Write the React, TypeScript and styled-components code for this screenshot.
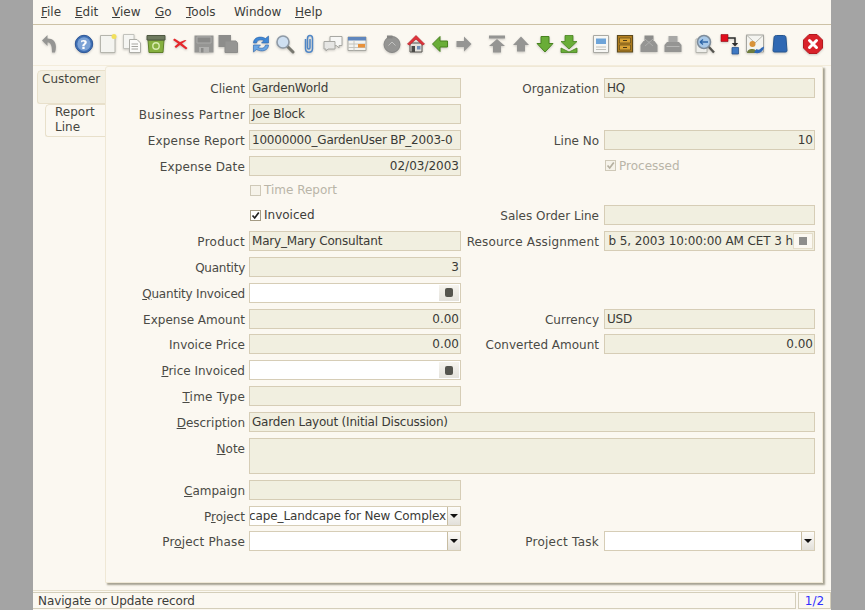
import React from "react";
import styled, { createGlobalStyle } from "styled-components";

const GlobalStyle = createGlobalStyle`
  html, body { margin: 0; padding: 0; height: 100%; background: #a4a4a4; overflow: hidden; }
  body { font-family: "DejaVu Sans", sans-serif; font-size: 12px; color: #3d3d3a; }
`;

const Page = styled.div`
  width: 798px;
  height: 610px;
  margin-left: 33px;
  background: #fbf8f1;
  display: flex;
  flex-direction: column;
`;

const MenuBar = styled.div`
  height: 24px;
  flex: none;
  display: flex;
  align-items: center;
  border-bottom: 1px solid #cdc2a6;
  padding-left: 8px;
  line-height: 24px;
`;

const MenuItem = styled.span<{ $w: number }>`
  width: ${(p) => p.$w}px;
  color: #3d3d3a;
`;

const ToolBar = styled.div`
  box-sizing: border-box;
  height: 41px;
  flex: none;
  display: flex;
  align-items: center;
  padding: 0 0 3px 5px;
  border-bottom: 1px solid #f3ecdb;
`;

const ToolGroup = styled.div<{ $gap?: number; $inner?: number }>`
  display: flex;
  margin-left: ${(p) => p.$gap ?? 0}px;
  gap: ${(p) => p.$inner ?? 0}px;
`;

const ToolIcon = styled.svg`
  width: 24px;
  height: 24px;
  display: block;
  filter: drop-shadow(0 1px 1px rgba(0, 0, 0, 0.2));
`;

const Body = styled.div`
  box-sizing: border-box;
  flex: none;
  height: 525px;
  display: flex;
  padding: 0 8px 0 4px;
  border-bottom: 1px solid #e6dfcc;
`;

const TabColumn = styled.div`
  width: 68px;
  flex: none;
  padding-top: 4px;
  display: flex;
  flex-direction: column;
  align-items: flex-end;
`;

const Tab = styled.div<{ $active?: boolean }>`
  box-sizing: border-box;
  width: ${(p) => (p.$active ? 60 : 68)}px;
  height: ${(p) => (p.$active ? 33 : 34)}px;
  padding: ${(p) => (p.$active ? "0 0 0 9px" : "1px 0 0 4px")};
  line-height: 15px;
  background: ${(p) => (p.$active ? "#fbf8f1" : "#f3efe1")};
  border: 1px solid #e8e0cb;
  border-right: none;
  border-radius: 5px 0 0 3px;
  color: #46463f;
`;

const Panel = styled.div`
  box-sizing: border-box;
  width: 718px;
  height: 517px;
  padding: 11px 8px 0 11px;
  border: 1px solid #efe8d6;
  border-radius: 3px 0 0 0;
  box-shadow: 2px 2px 2px #a5a190;
`;

const FormGrid = styled.div`
  display: grid;
  grid-template-columns: 128px 212px 135px 211px;
  grid-template-rows: repeat(4, 20px) 18px repeat(9, 20px) 36px repeat(3, 20px);
  column-gap: 4px;
  row-gap: 5.85px;
`;

const Label = styled.label<{ $col?: number; $off?: boolean; $track?: number }>`
  grid-column: ${(p) => p.$col ?? 1};
  text-align: right;
  line-height: 23px;
  padding-right: ${(p) => (p.$col === 3 ? 1 : 0)}px;
  letter-spacing: ${(p) => p.$track ?? 0}px;
  white-space: nowrap;
  color: ${(p) => (p.$off ? "#b9b5a8" : "#4a4a45")};
`;

const Field = styled.div<{ $col?: number; $span?: number; $edit?: boolean; $right?: boolean; $reserve?: number }>`
  grid-column: ${(p) => p.$col ?? 2} / span ${(p) => p.$span ?? 1};
  box-sizing: border-box;
  border: 1px solid #d6cdb6;
  background: ${(p) => (p.$edit ? "#ffffff" : "#f1efe0")};
  display: flex;
  justify-content: ${(p) => (p.$right ? "flex-end" : "flex-start")};
  padding: 0 ${(p) => p.$reserve ?? 1}px 0 2px;
  line-height: 18px;
  letter-spacing: ${(p) => (p.$right ? 0 : -0.2)}px;
  color: #3a3a36;
  white-space: nowrap;
  overflow: hidden;
  position: relative;
`;

const ClipText = styled.span`
  flex: none;
  letter-spacing: -0.1px;
`;

const FieldButton = styled.span<{ $flat?: boolean }>`
  position: absolute;
  right: 1px;
  top: 1px;
  width: 20px;
  height: 16px;
  display: flex;
  align-items: center;
  justify-content: center;
  background: ${(p) => (p.$flat ? "#fbf8f1" : "linear-gradient(#f6f4ee, #e4e2dc)")};
  border: ${(p) => (p.$flat ? "1px solid #e4ddca" : "none")};
  box-sizing: border-box;
`;

const ComboButton = styled.span`
  position: absolute;
  right: 0;
  top: 0;
  bottom: 0;
  width: 12px;
  display: flex;
  align-items: center;
  justify-content: center;
  border-left: 1px solid #c8bda2;
  background: linear-gradient(#fdfcf9, #e2e0da);
`;

const ComboArrow = styled.i`
  width: 0;
  height: 0;
  border-left: 4px solid transparent;
  border-right: 4px solid transparent;
  border-top: 4px solid #111;
`;

const Can = styled.i`
  width: 8px;
  height: 9px;
  border-radius: 2px;
  background: #55554f;
`;

const Square = styled.i`
  width: 8px;
  height: 8px;
  background: #8d8d8b;
`;

const CheckRow = styled.div<{ $col?: number; $off?: boolean }>`
  grid-column: ${(p) => p.$col ?? 2};
  display: flex;
  align-items: center;
  gap: 3px;
  padding-left: 1px;
  color: ${(p) => (p.$off ? "#b9b5a8" : "#3d3d3a")};
`;

const CheckBox = styled.span<{ $off?: boolean }>`
  width: 9px;
  height: 9px;
  flex: none;
  border: 1px solid ${(p) => (p.$off ? "#cfc9b8" : "#a49b84")};
  background: ${(p) => (p.$off ? "#f6f3ea" : "#fff")};
  display: flex;
`;

const StatusBar = styled.div`
  flex: none;
  height: 17px;
  margin-top: 1px;
  display: flex;
  gap: 2px;
`;

const StatusText = styled.div`
  flex: 1;
  border: 1px solid #d4ceba;
  border-left: none;
  padding-left: 5px;
  line-height: 16px;
  letter-spacing: -0.1px;
  color: #3d3d3a;
`;

const StatusPage = styled.div`
  width: 31px;
  flex: none;
  text-align: center;
  border: 1px solid #d4ceba;
  line-height: 16px;
  color: #3030ff;
`;

const Tick = ({ off }: { off?: boolean }) => (
  <svg width="9" height="9" viewBox="0 0 9 9">
    <path d="M1.5 4.5 L3.7 7 L7.8 1.5" fill="none" stroke={off ? "#b5b0a0" : "#222"} strokeWidth="1.7" />
  </svg>
);

const G = "#959593";
const Green = "#69ad38";
const GreenDark = "#48821f";

const icons: Record<string, React.ReactNode> = {
  undo: <path d="M9.5 3 L4 8.5 L9.5 14 V10.5 C12.5 10.5 14 13 14 20.5 H17 C19.5 12.5 17 6.5 9.5 6.5 Z" fill={G} />,
  help: (
    <>
      <circle cx="12" cy="12" r="8.7" fill="#3f6fb4" stroke="#2c5596" />
      <circle cx="12" cy="12" r="6.7" fill="#7ba2d6" />
      <text x="12" y="16.5" textAnchor="middle" fontSize="12.5" fontWeight="bold" fill="#fff" fontFamily="DejaVu Sans">?</text>
    </>
  ),
  add: (
    <>
      <path d="M4.5 3.5 H19 V20.5 H4.5 Z" fill="#f4f4f0" stroke="#b5b5ad" />
      <circle cx="18" cy="4.5" r="2.5" fill="#f2e05c" />
    </>
  ),
  copy: (
    <>
      <path d="M3.5 2.5 H14 V16.5 H3.5 Z" fill="#f5f5f2" stroke="#c2c2bc" />
      <path d="M9.5 7.5 H17 L20.5 11 V20.5 H9.5 Z" fill="#fbfbf9" stroke="#adada7" />
      <path d="M11.5 12 H18 M11.5 14.5 H18 M11.5 17 H18" stroke="#a5a5a0" />
    </>
  ),
  trash: (
    <>
      <path d="M4 8 H20 L19 20.5 H5 Z" fill="#86b03f" stroke="#5f7f29" />
      <path d="M3 3.5 H21 V8 H3 Z" fill="#6e7a5e" stroke="#4f5842" />
      <circle cx="12" cy="14" r="3.2" fill="none" stroke="#d8ebb0" strokeWidth="1.4" />
    </>
  ),
  del: <path d="M5 8 L10 11.5 L6.5 14.5 L8 16 L12 13 L18 17.5 L19.5 16 L14 11.5 L18.5 8.5 L17 8 L12 10 L6.5 6.5 Z" fill="#e5282c" />,
  save: (
    <>
      <path d="M2.5 3.5 H21.5 V20.5 H2.5 Z" fill={G} />
      <path d="M5 5 H19 V11 H5 Z" fill="#8a8a88" stroke="#acacaa" />
      <path d="M7 15 H17 V20.5 H7 Z" fill="#b0b0ae" />
      <path d="M9 16 H11.5 V20.5 H9 Z" fill="#8a8a88" />
    </>
  ),
  saveNew: (
    <>
      <path d="M2.5 3 H15 V15 H2.5 Z" fill="#8d8d8b" />
      <path d="M9 9 H20 L21.5 11 V20.5 H9 Z" fill={G} stroke="#8d8d8b" />
    </>
  ),
  refresh: (
    <>
      <path d="M4.5 11 C4.5 5.5 11 3.5 16.5 6.5 L19.5 4 V11 H12.5 L15 8.5 C11 7 8 8 7.5 11 Z" fill="#3f88d6" stroke="#2a62a8" strokeWidth="0.6" />
      <path d="M19.5 13 C19.5 18.5 13 20.5 7.5 17.5 L4.5 20 V13 H11.5 L9 15.5 C13 17 16 16 16.5 13 Z" fill="#6aa6e4" stroke="#2a62a8" strokeWidth="0.6" />
    </>
  ),
  find: (
    <>
      <path d="M14 14 L20 20" stroke="#77776f" strokeWidth="3" strokeLinecap="round" />
      <circle cx="10" cy="10" r="6" fill="#cfe0f2" stroke="#8f9aa6" strokeWidth="1.6" />
    </>
  ),
  attach: (
    <path d="M8.5 7 V16.5 C8.5 21.5 15.5 21.5 15.5 16.5 V6.5 C15.5 2.5 10.5 2.5 10.5 6.5 V15.5 C10.5 17.5 13 17.5 13 15.5 V7" fill="none" stroke="#4f86c6" strokeWidth="1.5" />
  ),
  chat: (
    <>
      <path d="M9 4.5 H21 V13.5 H18 V16 L15.5 13.5 H9 Z" fill="#f7f7f5" stroke="#a8a8a3" />
      <path d="M3 9.5 H14 V17 H7 L5 19 V17 H3 Z" fill="#e6e6e4" stroke="#a8a8a3" />
    </>
  ),
  grid: (
    <>
      <path d="M3 5 H21 V18.5 H3 Z" fill="#f3f3ef" stroke="#a9a9a3" />
      <path d="M3 5 H21 V8.5 H3 Z" fill="#5f86bd" />
      <path d="M3 12 H21 M3 15.5 H21 M9 8.5 V18.5" stroke="#c4c4be" />
      <path d="M13 12 H20 V15.5 H13 Z" fill="#e8913a" />
    </>
  ),
  history: (
    <>
      <circle cx="12" cy="12.5" r="8" fill={G} stroke="#858583" />
      <path d="M8.5 13.5 L12 10 L15.5 13.5" fill="none" stroke="#c2c2c0" />
      <path d="M7 3.5 H12.5 V6.5 H7 Z" fill="#858583" />
    </>
  ),
  home: (
    <>
      <path d="M6 11 H18 V20 H6 Z" fill="#e5e3dd" stroke="#55534f" />
      <path d="M3.5 12 L12 3.5 L20.5 12 L18.5 13 L12 7 L5.5 13 Z" fill="#e2323a" stroke="#b31e25" strokeWidth="0.7" />
      <path d="M7.5 14 H11 V20 H7.5 Z" fill="#4a4a47" />
      <path d="M13 14 H16.5 V17.5 H13 Z" fill="#6e8fb8" />
    </>
  ),
  left: <path d="M4.5 12 L12 4.5 V9 H19.5 V15 H12 V19.5 Z" fill={Green} stroke={GreenDark} />,
  right: <path d="M19.5 12 L12 4.5 V9 H4.5 V15 H12 V19.5 Z" fill={G} />,
  first: <path d="M4 3.5 H20 V6.5 H4 Z M12 7 L20 14 H16 V20.5 H8 V14 H4 Z" fill={G} />,
  up: <path d="M12 4.5 L20 13 H16 V19.5 H8 V13 H4 Z" fill={G} />,
  down: <path d="M12 20 L20 11.5 H16 V4.5 H8 V11.5 H4 Z" fill={Green} stroke={GreenDark} />,
  last: <path d="M8 3.5 H16 V9.5 H20 L12 17 L4 9.5 H8 Z M4 16 L12 20 L20 16 V20.5 H4 Z" fill={Green} stroke={GreenDark} strokeWidth="0.8" />,
  report: (
    <>
      <path d="M4.5 3.5 H19.5 V20.5 H4.5 Z" fill="#f7f7f4" stroke="#a9a9a3" />
      <path d="M7 6.5 H17 V12 H7 Z" fill="#6ea4d8" />
      <path d="M7 15 H17 M7 17.5 H17" stroke="#c0c0ba" />
    </>
  ),
  archive: (
    <>
      <path d="M4.5 3.5 H19.5 V20 H4.5 Z" fill="#b5801f" stroke="#5d4a1d" strokeWidth="1.2" />
      <path d="M6.5 6 H17.5 V11 H6.5 Z M6.5 13 H17.5 V18 H6.5 Z" fill="#d9a234" stroke="#5d4a1d" strokeWidth="0.7" />
      <path d="M10 8.5 H14 M10 15.5 H14" stroke="#4a3a14" strokeWidth="1.2" />
    </>
  ),
  preview: (
    <>
      <path d="M7.5 3.5 H16.5 V11 H7.5 Z" fill="#8d8d8b" />
      <path d="M3.5 13 L6.5 9 H17.5 L20.5 13 V20 H3.5 Z" fill={G} />
      <path d="M8 7 L16 14 M16 7 L8 14" stroke="#adadab" />
    </>
  ),
  print: (
    <>
      <path d="M7.5 4 H16.5 V11 H7.5 Z" fill="#a8a8a6" />
      <path d="M3.5 13 L6 10 H18 L20.5 13 V20 H3.5 Z" fill={G} />
      <path d="M5.5 14.5 H18.5" stroke="#b6b6b4" />
    </>
  ),
  zoom: (
    <>
      <path d="M3 7 H14 V20.5 H3 Z" fill="#eeeeea" stroke="#b5b5ae" />
      <path d="M15 14 L21 20.5" stroke="#55554f" strokeWidth="2.4" />
      <circle cx="11" cy="10" r="6.5" fill="#a9c9e8" stroke="#7e8c9a" strokeWidth="1.5" />
      <path d="M7 10 H15 M7 10 L10 7.5 M7 10 L10 12.5" stroke="#2f67a8" strokeWidth="1.3" fill="none" />
    </>
  ),
  workflow: (
    <>
      <path d="M3 2.5 H10 V9.5 H3 Z" fill="#e00d1c" stroke="#8f0a14" strokeWidth="0.6" />
      <path d="M14 15.5 H20.5 V22 H14 Z" fill="#3e78c2" stroke="#28548e" strokeWidth="0.8" />
      <path d="M10 6 H17 V12" fill="none" stroke="#2c2c2c" strokeWidth="1.5" />
      <path d="M13.8 11 H20.2 L17 14.5 Z" fill="#2c2c2c" />
    </>
  ),
  request: (
    <>
      <path d="M3.5 3 H20.5 V20 H3.5 Z" fill="#f4f4f0" stroke="#a5a5a0" />
      <path d="M3.5 3 L12 11 L20.5 3" fill="none" stroke="#b5b5ae" />
      <circle cx="9.5" cy="12" r="3" fill="#d8933a" />
      <path d="M4 21 C4 15.5 14 15.5 14 21 Z" fill="#6f7d3d" />
      <path d="M11 20.5 C16 22.5 21 19.5 21 14.5 L18 16 C17 18 15 18 13.5 17 Z" fill="#2f69b8" />
    </>
  ),
  product: <path d="M6 6 C6 4 7 3.5 8.5 3.5 H15.5 C17 3.5 18 4 18 6 L19 18.5 C19 19.5 18.5 20 17.5 20 H6.5 C5.5 20 5 19.5 5 18.5 Z" fill="#2f68b3" stroke="#26568f" />,
  close: (
    <>
      <path d="M8 2.5 H16 L21.5 8 V16 L16 21.5 H8 L2.5 16 V8 Z" fill="#d9222a" stroke="#b31a20" />
      <path d="M8.5 8.5 L15.5 15.5 M15.5 8.5 L8.5 15.5" stroke="#fff" strokeWidth="3" strokeLinecap="round" />
    </>
  ),
};

const toolGroups: { gap: number; inner?: number; names: string[] }[] = [
  { gap: 0, names: ["undo"] },
  { gap: 10, names: ["help", "add", "copy", "trash", "del", "save", "saveNew"] },
  { gap: 9, names: ["refresh", "find", "attach", "chat", "grid"] },
  { gap: 11, names: ["history", "home", "left", "right"] },
  { gap: 9, names: ["first", "up", "down", "last"] },
  { gap: 8, names: ["report", "archive", "preview", "print"] },
  { gap: 8, inner: 1, names: ["zoom", "workflow", "request", "product"] },
  { gap: 9, names: ["close"] },
];

const menus: [React.ReactNode, number][] = [
  [<><u>F</u>ile</>, 34],
  [<><u>E</u>dit</>, 37],
  [<><u>V</u>iew</>, 43],
  [<><u>G</u>o</>, 31],
  [<><u>T</u>ools</>, 48],
  ["Window", 61],
  [<><u>H</u>elp</>, 40],
];

export default function App() {
  return (
    <>
      <GlobalStyle />
      <Page>
        <MenuBar>
          {menus.map(([t, w], i) => (
            <MenuItem key={i} $w={w}>{t}</MenuItem>
          ))}
        </MenuBar>
        <ToolBar>
          {toolGroups.map((g, i) => (
            <ToolGroup key={i} $gap={g.gap} $inner={g.inner}>
              {g.names.map((n) => (
                <ToolIcon key={n} viewBox="0 0 24 24">{icons[n]}</ToolIcon>
              ))}
            </ToolGroup>
          ))}
        </ToolBar>
        <Body>
          <TabColumn>
            <Tab>Customer</Tab>
            <Tab $active>Report<br />Line</Tab>
          </TabColumn>
          <Panel>
            <FormGrid>
              <Label>Client</Label>
              <Field>GardenWorld</Field>
              <Label $col={3}>Organization</Label>
              <Field $col={4}>HQ</Field>

              <Label $track={0.37}>Business Partner</Label>
              <Field>Joe Block</Field>

              <Label $track={0.2}>Expense Report</Label>
              <Field>10000000_GardenUser BP_2003-0</Field>
              <Label $col={3}>Line No</Label>
              <Field $col={4} $right>10</Field>

              <Label $track={0.15}>Expense Date</Label>
              <Field $right>02/03/2003</Field>
              <CheckRow $col={4} $off><CheckBox $off><Tick off /></CheckBox>Processed</CheckRow>

              <CheckRow $off><CheckBox $off />Time Report</CheckRow>

              <CheckRow><CheckBox><Tick /></CheckBox>Invoiced</CheckRow>
              <Label $col={3}>Sales Order Line</Label>
              <Field $col={4} />

              <Label $track={0.3}>Product</Label>
              <Field>Mary_Mary Consultant</Field>
              <Label $col={3} $track={0.15}>Resource Assignment</Label>
              <Field $col={4} $right $reserve={21}>
                <ClipText>b 5, 2003 10:00:00 AM CET 3 h</ClipText>
                <FieldButton $flat><Square /></FieldButton>
              </Field>

              <Label $track={-0.25}>Quantity</Label>
              <Field $right>3</Field>

              <Label $track={-0.2}><u>Q</u>uantity Invoiced</Label>
              <Field $edit><FieldButton><Can /></FieldButton></Field>

              <Label>Expense Amount</Label>
              <Field $right>0.00</Field>
              <Label $col={3}>Currency</Label>
              <Field $col={4}>USD</Field>

              <Label>Invoice Price</Label>
              <Field $right>0.00</Field>
              <Label $col={3}>Converted Amount</Label>
              <Field $col={4} $right>0.00</Field>

              <Label><u>P</u>rice Invoiced</Label>
              <Field $edit><FieldButton><Can /></FieldButton></Field>

              <Label $track={0.2}><u>T</u>ime Type</Label>
              <Field />

              <Label><u>D</u>escription</Label>
              <Field $span={3}>Garden Layout (Initial Discussion)</Field>

              <Label><u>N</u>ote</Label>
              <Field $span={3} />

              <Label><u>C</u>ampaign</Label>
              <Field />

              <Label>P<u>r</u>oject</Label>
              <Field $edit $right $reserve={14}>
                <ClipText>cape_Landcape for New Complex</ClipText>
                <ComboButton><ComboArrow /></ComboButton>
              </Field>

              <Label $track={0.15}>Pr<u>o</u>ject Phase</Label>
              <Field $edit><ComboButton><ComboArrow /></ComboButton></Field>
              <Label $col={3} $track={0.25}>Project Task</Label>
              <Field $col={4} $edit><ComboButton><ComboArrow /></ComboButton></Field>
            </FormGrid>
          </Panel>
        </Body>
        <StatusBar>
          <StatusText>Navigate or Update record</StatusText>
          <StatusPage>1/2</StatusPage>
        </StatusBar>
      </Page>
    </>
  );
}
